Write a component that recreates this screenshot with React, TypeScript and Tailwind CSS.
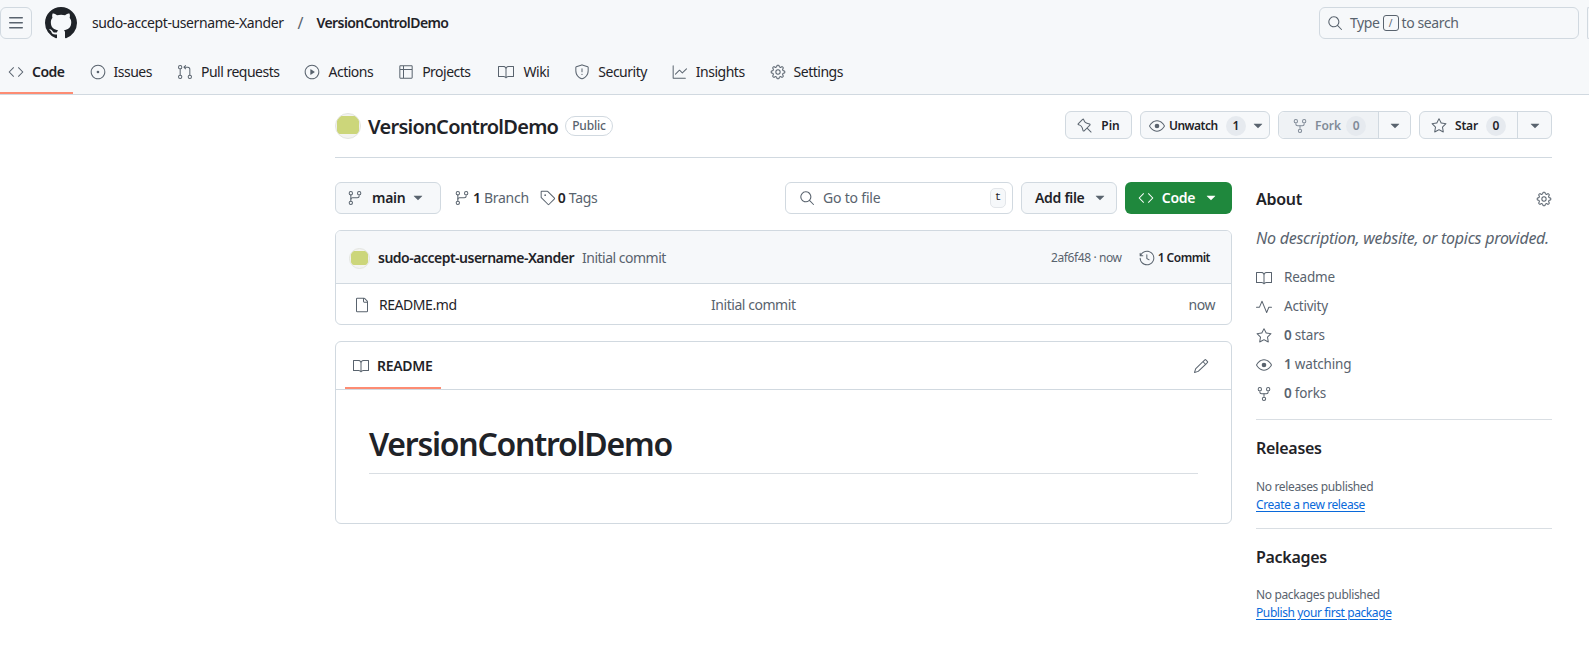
import type { ReactNode } from 'react'
import {
  GoBook,
  GoCode,
  GoEye,
  GoFile,
  GoGear,
  GoGitBranch,
  GoGitPullRequest,
  GoGraph,
  GoHistory,
  GoIssueOpened,
  GoPencil,
  GoPin,
  GoPlay,
  GoPulse,
  GoRepoForked,
  GoSearch,
  GoShield,
  GoStar,
  GoTable,
  GoTag,
  GoTriangleDown,
} from 'react-icons/go'

const tabs = [
  { label: 'Code', icon: GoCode, active: true },
  { label: 'Issues', icon: GoIssueOpened },
  { label: 'Pull requests', icon: GoGitPullRequest },
  { label: 'Actions', icon: GoPlay },
  { label: 'Projects', icon: GoTable },
  { label: 'Wiki', icon: GoBook, wide: true },
  { label: 'Security', icon: GoShield },
  { label: 'Insights', icon: GoGraph },
  { label: 'Settings', icon: GoGear },
]

function Avatar({ small }: { small?: boolean }) {
  return (
    <div
      className={`flex shrink-0 items-start justify-center overflow-hidden rounded-full border border-[#e3e5e0] bg-[#f3f3f0] ${
        small ? 'h-[21px] w-[21px] pt-[2px]' : 'mt-[2px] h-[26px] w-[26px] pt-[2px]'
      }`}
    >
      <div className={`rounded-[3px] bg-[#ccd67a] ${small ? 'h-[14px] w-[17px]' : 'h-[18px] w-[22px]'}`} />
    </div>
  )
}

function Count({ value, muted }: { value: string; muted?: boolean }) {
  return (
    <span
      className={`flex h-[20px] w-[20px] items-center justify-center rounded-full bg-[#e6eaef] text-xs font-semibold ${
        muted ? 'text-[#818b98]' : 'text-[#1f2328]'
      }`}
    >
      {value}
    </span>
  )
}

function SideRow({ icon, children }: { icon: ReactNode; children: ReactNode }) {
  return (
    <div className="flex h-[29px] items-center gap-[12px] text-[13.5px] tracking-[-0.2px] text-[#59636e]">
      <span className="flex w-4 justify-center text-[#59636e]">{icon}</span>
      <span>{children}</span>
    </div>
  )
}

export default function App() {
  return (
    <div className="h-[645px] w-[1589px] overflow-hidden bg-white font-['Noto_Sans',sans-serif] text-[#1f2328]">
      {/* Header */}
      <header className="h-[95px] border-b border-[#d1d9e0] bg-[#f6f8fa]">
        <div className="flex h-[46px] items-center">
          <button className="flex h-[32px] w-[32px] items-center justify-center rounded-md border border-[#d1d9e0] text-[#59636e]">
            <svg viewBox="0 0 16 16" width="16" height="16" fill="currentColor">
              <path d="M1 2.75A.75.75 0 0 1 1.75 2h12.5a.75.75 0 0 1 0 1.5H1.75A.75.75 0 0 1 1 2.75Zm0 5A.75.75 0 0 1 1.75 7h12.5a.75.75 0 0 1 0 1.5H1.75A.75.75 0 0 1 1 7.75ZM1.75 12h12.5a.75.75 0 0 1 0 1.5H1.75a.75.75 0 0 1 0-1.5Z" />
            </svg>
          </button>
          <svg viewBox="0 0 16 16" width="32" height="32" fill="currentColor" className="ml-[13px] text-[#1f2328]">
            <path d="M8 0c4.42 0 8 3.58 8 8a8.013 8.013 0 0 1-5.45 7.59c-.4.08-.55-.17-.55-.38 0-.27.01-1.13.01-2.2 0-.75-.25-1.23-.54-1.48 1.78-.2 3.65-.88 3.65-3.95 0-.88-.31-1.59-.82-2.15.08-.2.36-1.02-.08-2.12 0 0-.67-.22-2.2.82-.64-.18-1.32-.27-2-.27-.68 0-1.36.09-2 .27-1.53-1.03-2.2-.82-2.2-.82-.44 1.1-.16 1.92-.08 2.12-.51.56-.82 1.28-.82 2.15 0 3.06 1.86 3.75 3.64 3.95-.23.2-.44.55-.51 1.07-.46.21-1.61.55-2.33-.66-.15-.24-.6-.83-1.23-.82-.67.01-.27.38.01.53.34.19.73.9.82 1.13.16.45.68 1.31 2.69.94 0 .67.01 1.3.01 1.49 0 .21-.15.45-.55.38A7.995 7.995 0 0 1 0 8c0-4.42 3.58-8 8-8Z" />
          </svg>
          <span className="ml-[15px] text-sm tracking-[-0.4px]">sudo-accept-username-Xander</span>
          <span className="ml-[14px] text-base text-[#59636e]">/</span>
          <span className="ml-[13px] text-sm font-semibold tracking-[-0.58px]">VersionControlDemo</span>
          <div className="ml-auto flex items-center">
            <div className="flex h-[32px] w-[260px] items-center rounded-md border border-[#d1d9e0] pl-[7px] text-sm text-[#59636e]">
              <GoSearch size={16} />
              <span className="ml-[7px] tracking-[-0.4px]">Type</span>
              <span className="mx-[3px] flex h-[16px] w-[16px] items-center justify-center rounded-[3px] border border-[#59636e] text-[10px]">
                /
              </span>
              <span className="tracking-[-0.4px]">to search</span>
            </div>
            <div className="ml-[8px] h-[32px] w-[2px] rounded-l-md border border-r-0 border-[#d1d9e0]" />
          </div>
        </div>
        <nav className="flex h-[48px] gap-[9px]">
          {tabs.map((tab) => (
            <div
              key={tab.label}
              className={`flex items-center border-b-2 px-[8px] pt-[6px] text-sm tracking-[-0.5px] ${
                tab.active ? 'border-[#fd8c73] font-semibold' : 'border-transparent'
              } ${tab.wide ? 'ml-[2px] gap-[10px]' : 'gap-[8px]'}`}
            >
              <tab.icon size={16} className="text-[#59636e]" />
              <span>{tab.label}</span>
            </div>
          ))}
        </nav>
      </header>

      <main className="ml-[335px] w-[1217px]">
        {/* Repo title */}
        <div className="flex items-center border-b border-[#d1d9e0] pb-[18px] pt-[16px]">
          <Avatar />
          <h1 className="ml-[7px] h-[28px] text-xl font-semibold leading-[32px] tracking-[-0.73px]">VersionControlDemo</h1>
          <span className="ml-[7px] mt-[2px] flex h-[20px] items-center rounded-full border border-[#d1d9e0] px-[6px] text-xs font-medium tracking-[-0.2px] text-[#59636e]">
            Public
          </span>
          <div className="ml-auto flex gap-[8px] text-xs font-semibold">
            <button className="flex h-[28px] w-[67px] items-center justify-center gap-[8px] rounded-md border border-[#d1d9e0] bg-[#f6f8fa] pt-[1px]">
              <GoPin size={16} className="text-[#59636e]" />
              Pin
            </button>
            <button className="flex h-[28px] w-[130px] items-center gap-[4px] rounded-md border border-[#d1d9e0] bg-[#f6f8fa] pl-[8px] pt-[1px] tracking-[-0.5px]">
              <GoEye size={16} className="text-[#59636e]" />
              Unwatch
              <span className="ml-[4px]">
                <Count value="1" />
              </span>
              <GoTriangleDown size={16} className="text-[#59636e]" />
            </button>
            <div className="flex h-[28px] w-[133px] rounded-md border border-[#d1d9e0]">
              <div className="flex w-[100px] items-center gap-[7px] rounded-l-md border-r border-[#d1d9e0] bg-[#eff2f5] pl-[13px] pt-[1px] text-[#818b98]">
                <GoRepoForked size={16} />
                Fork
                <span className="-ml-[2px]">
                  <Count value="0" muted />
                </span>
              </div>
              <div className="flex flex-1 items-center justify-center rounded-r-md bg-[#f6f8fa] pt-[1px] text-[#59636e]">
                <GoTriangleDown size={16} />
              </div>
            </div>
            <div className="flex h-[28px] w-[133px] rounded-md border border-[#d1d9e0] bg-[#f6f8fa]">
              <div className="flex w-[98px] items-center justify-center gap-[8px] border-r border-[#d1d9e0] pt-[1px] tracking-[-0.2px]">
                <GoStar size={16} className="text-[#59636e]" />
                Star
                <Count value="0" />
              </div>
              <div className="flex flex-1 items-center justify-center pt-[1px] text-[#59636e]">
                <GoTriangleDown size={16} />
              </div>
            </div>
          </div>
        </div>

        <div className="mt-[24px] flex gap-[24px]">
          {/* Main column */}
          <section className="w-[897px]">
            <div className="flex h-[32px] items-center text-sm">
              <button className="flex h-[32px] w-[106px] items-center rounded-md border border-[#d1d9e0] bg-[#f6f8fa] pl-[11px] font-semibold tracking-[-0.3px]">
                <GoGitBranch size={16} className="text-[#59636e]" />
                <span className="ml-[9px]">main</span>
                <GoTriangleDown size={16} className="ml-[5px] text-[#59636e]" />
              </button>
              <div className="ml-[13px] flex items-center gap-[3px] tracking-[-0.3px] text-[#59636e]">
                <GoGitBranch size={16} />
                <span>
                  <b className="font-semibold text-[#1f2328]">1</b> Branch
                </span>
              </div>
              <div className="ml-[11px] flex items-center gap-[2px] tracking-[-0.3px] text-[#59636e]">
                <GoTag size={16} />
                <span>
                  <b className="font-semibold text-[#1f2328]">0</b> Tags
                </span>
              </div>
              <div className="ml-auto flex w-[228px] items-center self-stretch rounded-md border border-[#d1d9e0] pl-[13px] pr-[6px] text-[#59636e]">
                <GoSearch size={16} />
                <span className="ml-[8px] tracking-[-0.2px]">Go to file</span>
                <span className="ml-auto flex h-[20px] w-[16px] items-center justify-center rounded-[5px] border border-[#e3e6ea] bg-[#f6f8fa] font-['Liberation_Mono',monospace] text-[11px] text-[#1f2328]">
                  t
                </span>
              </div>
              <button className="ml-[8px] flex h-[32px] w-[96px] items-center gap-[8px] rounded-md border border-[#d1d9e0] bg-[#f6f8fa] pl-[13px] font-semibold tracking-[-0.3px]">
                Add file
                <GoTriangleDown size={16} className="text-[#59636e]" />
              </button>
              <button className="ml-[8px] flex h-[32px] w-[107px] items-center justify-center gap-[8px] rounded-md bg-[#1f883d] font-semibold tracking-[-0.3px] text-white">
                <GoCode size={16} />
                Code
                <GoTriangleDown size={16} />
              </button>
            </div>

            {/* Commit box */}
            <div className="mt-[16px] overflow-hidden rounded-md border border-[#d1d9e0]">
              <div className="flex h-[53px] items-center border-b border-[#d1d9e0] bg-[#f6f8fa] pl-[13px] pr-[21px] pt-[2px]">
                <Avatar small />
                <span className="ml-[8px] text-sm font-semibold tracking-[-0.5px]">sudo-accept-username-Xander</span>
                <span className="ml-[8px] text-sm tracking-[-0.5px] text-[#59636e]">Initial commit</span>
                <span className="ml-auto text-xs tracking-[-0.4px] text-[#59636e]">2af6f48 · now</span>
                <GoHistory size={16} className="ml-[17px] text-[#59636e]" />
                <span className="ml-[3px] text-xs font-semibold tracking-[-0.5px]">1 Commit</span>
              </div>
              <div className="flex h-[40px] items-center pt-[2px] text-sm tracking-[-0.45px]">
                <GoFile size={16} className="ml-[18px] text-[#59636e]" />
                <span className="ml-[9px] w-[332px]">README.md</span>
                <span className="text-[#59636e]">Initial commit</span>
                <span className="ml-auto mr-[16px] text-[#59636e]">now</span>
              </div>
            </div>

            {/* Readme */}
            <div className="mt-[16px] h-[183px] rounded-md border border-[#d1d9e0]">
              <div className="flex h-[48px] items-center border-b border-[#d1d9e0]">
                <div className="ml-[9px] flex h-full w-[96px] items-center gap-[8px] border-b-2 border-[#fd8c73] pl-[8px] pt-[2px] text-sm font-semibold tracking-[-0.3px]">
                  <GoBook size={16} className="text-[#59636e]" />
                  README
                </div>
                <GoPencil size={16} className="ml-auto mr-[22px] text-[#59636e]" />
              </div>
              <div className="px-[33px] pt-[33px]">
                <h2 className="border-b border-[#d9dee3] pb-[8px] text-[32px] font-semibold leading-[42px] tracking-[-1.25px]">
                  VersionControlDemo
                </h2>
              </div>
            </div>
          </section>

          {/* Sidebar */}
          <aside className="w-[296px]">
            <div className="flex h-[32px] items-center justify-between pt-[1px]">
              <h2 className="text-base font-semibold tracking-[-0.3px]">About</h2>
              <GoGear size={16} className="text-[#59636e]" />
            </div>
            <p className="mt-[12px] text-base italic leading-[24px] tracking-[-0.27px] text-[#59636e]">
              No description, website, or topics provided.
            </p>
            <div className="mt-[13px]">
              <SideRow icon={<GoBook size={16} />}>Readme</SideRow>
              <SideRow icon={<GoPulse size={16} />}>Activity</SideRow>
              <SideRow icon={<GoStar size={16} />}>
                <b className="font-semibold">0</b> stars
              </SideRow>
              <SideRow icon={<GoEye size={16} />}>
                <b className="font-semibold">1</b> watching
              </SideRow>
              <SideRow icon={<GoRepoForked size={16} />}>
                <b className="font-semibold">0</b> forks
              </SideRow>
            </div>
            <div className="mt-[11px] border-t border-[#d9dee3] pt-[16px]">
              <h2 className="text-base font-semibold leading-[24px] tracking-[-0.3px]">Releases</h2>
              <p className="mt-[18px] text-xs leading-[18px] tracking-[-0.35px] text-[#59636e]">No releases published</p>
              <a className="block w-fit text-xs leading-[18px] tracking-[-0.4px] text-[#0969da] underline underline-offset-2">
                Create a new release
              </a>
            </div>
            <div className="mt-[14px] border-t border-[#d9dee3] pt-[16px]">
              <h2 className="text-base font-semibold leading-[24px] tracking-[-0.3px]">Packages</h2>
              <p className="mt-[17px] text-xs leading-[18px] tracking-[-0.35px] text-[#59636e]">No packages published</p>
              <a className="block w-fit text-xs leading-[18px] tracking-[-0.4px] text-[#0969da] underline underline-offset-2">
                Publish your first package
              </a>
            </div>
          </aside>
        </div>
      </main>
    </div>
  )
}
